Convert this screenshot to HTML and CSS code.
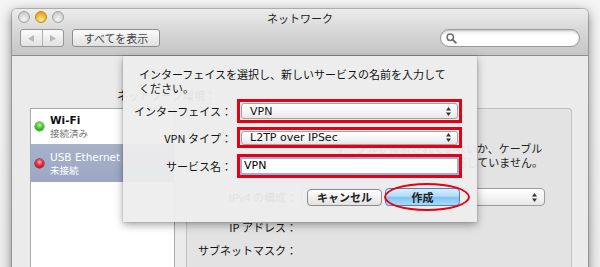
FILE: index.html
```html
<!DOCTYPE html>
<html lang="ja">
<head>
<meta charset="utf-8">
<title>ネットワーク</title>
<link rel="stylesheet" href="styles.css">
</head>
<body>
<div class="window">
  <div class="titlebar">
    <div class="title-row">
      <div class="lights">
        <span class="light"></span>
        <span class="light light-min"></span>
        <span class="light"></span>
      </div>
      <div class="title">ネットワーク</div>
      <div></div>
    </div>
    <div class="toolbar">
      <div class="nav-seg">
        <span class="seg"><svg width="6" height="7" viewBox="0 0 6 7"><polygon points="6,0 6,7 0,3.5" fill="#b8b8b8"/></svg></span>
        <span class="seg"><svg width="6" height="7" viewBox="0 0 6 7"><polygon points="0,0 0,7 6,3.5" fill="#b8b8b8"/></svg></span>
      </div>
      <div class="tb-btn">すべてを表示</div>
      <div class="search">
        <svg width="11" height="11" viewBox="0 0 11 11"><circle cx="4.3" cy="4.3" r="3.2" fill="none" stroke="#707070" stroke-width="1.5"/><line x1="6.6" y1="6.6" x2="9.8" y2="9.8" stroke="#707070" stroke-width="2" stroke-linecap="round"/></svg>
      </div>
    </div>
  </div>

  <div class="content">
    <div class="location">ネットワーク環境：</div>
    <div class="main">
      <div class="svc-list">
        <div class="svc">
          <span class="dot dot-green"></span>
          <div class="svc-text">
            <div class="svc-name">Wi-Fi</div>
            <div class="svc-status">接続済み</div>
          </div>
        </div>
        <div class="svc svc-selected">
          <span class="dot dot-red"></span>
          <div class="svc-text">
            <div class="svc-name">USB Ethernet</div>
            <div class="svc-status">未接続</div>
          </div>
        </div>
      </div>
      <div class="panel">
        <div class="status-text">ケーブルが接続されていないか、ケーブル<br>の先にあるデバイスが応答していません。</div>
        <div class="prow prow-ipv4"><span class="plabel">IPv4 の構成：</span>
          <span class="ppop">
            <svg width="5" height="9" viewBox="0 0 5 9"><polygon points="0,3.5 2.5,0 5,3.5" fill="#333"/><polygon points="0,5.5 2.5,9 5,5.5" fill="#333"/></svg>
          </span>
        </div>
        <div class="prow prow-ip"><span class="plabel">IP アドレス：</span></div>
        <div class="prow prow-mask"><span class="plabel">サブネットマスク：</span></div>
      </div>
    </div>
  </div>

  <div class="sheet">
    <div class="msg">インターフェイスを選択し、新しいサービスの名前を入力して<br>ください。</div>
    <div class="form">
      <div class="flabel row1">インターフェイス：</div>
      <div class="hl hl1">
        <div class="popup"><span>VPN</span>
          <svg width="5" height="9" viewBox="0 0 5 9"><polygon points="0,3.5 2.5,0 5,3.5" fill="#333"/><polygon points="0,5.5 2.5,9 5,5.5" fill="#333"/></svg>
        </div>
      </div>
      <div class="flabel row2">VPN タイプ：</div>
      <div class="hl hl2">
        <div class="popup"><span>L2TP over IPSec</span>
          <svg width="5" height="9" viewBox="0 0 5 9"><polygon points="0,3.5 2.5,0 5,3.5" fill="#333"/><polygon points="0,5.5 2.5,9 5,5.5" fill="#333"/></svg>
        </div>
      </div>
      <div class="flabel row3">サービス名：</div>
      <div class="hl hl3">
        <div class="field">VPN</div>
      </div>
    </div>
    <div class="buttons">
      <div class="btn">キャンセル</div>
      <div class="btn btn-primary">作成</div>
    </div>
    <div class="ring"></div>
  </div>
</div>
</body>
</html>
```

FILE: styles.css
```css
* { box-sizing: border-box; }

body {
  margin: 0;
  width: 600px;
  height: 267px;
  overflow: hidden;
  background: linear-gradient(#f5f5f5, #ededed);
  font-family: "DejaVu Sans", "Noto Sans CJK JP", sans-serif;
  font-size: 11px;
  color: #111;
}

.window {
  position: relative;
  margin: 9px 0 0 12px;
  width: 576px;
  height: 270px;
  background: #ebebeb;
  border-radius: 5px 5px 0 0;
  box-shadow: 0 0 0 1px rgba(0,0,0,0.18), 0 3px 12px rgba(0,0,0,0.5);
}

/* ---------- title bar ---------- */
.titlebar {
  height: 47px;
  background: linear-gradient(#ececec, #d6d6d6 50%, #c6c6c6);
  border-bottom: 1px solid #8c8c8c;
  border-radius: 5px 5px 0 0;
}

.title-row {
  display: grid;
  grid-template-columns: 1fr auto 1fr;
  align-items: start;
  height: 20px;
  padding-top: 2px;
}

.lights {
  display: flex;
  gap: 5px;
  padding-left: 6px;
}

.light {
  width: 12px;
  height: 12px;
  border-radius: 50%;
  border: 1px solid #a2a2a2;
  background: radial-gradient(circle at 50% 70%, #f8f8f8 0, #dcdcdc 45%, #bdbdbd 100%);
}

.light-min {
  border-color: #c78a16;
  background: radial-gradient(circle at 50% 75%, #fff3a8 0, #f8c03a 45%, #dc8d0c 100%);
}

.title {
  font-family: "Noto Sans CJK JP", sans-serif;
  font-size: 11px;
  line-height: 14px;
  color: #222;
}

.toolbar {
  display: flex;
  align-items: flex-start;
  padding: 0 8px;
  height: 26px;
}

.nav-seg {
  display: flex;
  width: 44px;
  height: 18px;
  border: 1px solid #979797;
  border-radius: 3px;
  background: linear-gradient(#fbfbfb, #e2e2e2);
}

.seg {
  flex: 1;
  display: flex;
  align-items: center;
  justify-content: center;
}

.seg + .seg { border-left: 1px solid #b0b0b0; }

.tb-btn {
  margin-left: 8px;
  width: 88px;
  height: 18px;
  border: 1px solid #8e8e8e;
  border-radius: 3px;
  background: linear-gradient(#fcfcfc, #e0e0e0);
  font-family: "Noto Sans CJK JP", sans-serif;
  font-size: 11px;
  line-height: 16px;
  text-align: center;
  color: #444;
}

.search {
  margin-left: auto;
  width: 140px;
  height: 18px;
  border: 1px solid #9a9a9a;
  border-radius: 9px;
  background: linear-gradient(#eeeeee, #ffffff 40%);
  box-shadow: inset 0 1px 2px rgba(0,0,0,0.18);
  display: flex;
  align-items: center;
  padding-left: 5px;
}

/* ---------- content ---------- */
.content {
  height: 222px;
}

.location {
  height: 52px;
  padding: 32px 0 0 105px;
  line-height: 14px;
  font-family: "Noto Sans CJK JP", sans-serif;
  color: #111;
}

.main {
  display: flex;
  gap: 11px;
  padding: 0 16px 0 18px;
}

.svc-list {
  width: 145px;
  height: 170px;
  background: #fff;
  border: 1px solid #a9a9a9;
  border-bottom: none;
}

.svc {
  display: flex;
  align-items: center;
  height: 35px;
  padding-left: 4px;
}

.svc-selected {
  height: 38px;
  background: linear-gradient(#a6b1ca, #9ca8c3);
  color: #fff;
}

.svc-text {
  margin-left: 6px;
  padding-top: 1px;
}

.svc-name {
  font-size: 10.5px;
  line-height: 13px;
  font-weight: bold;
}

.svc-selected .svc-name { font-weight: normal; }

.svc-status {
  font-family: "Noto Sans CJK JP", sans-serif;
  font-size: 9.5px;
  line-height: 13px;
  color: #777;
}

.svc-selected .svc-status { color: #fff; }

.dot {
  width: 9px;
  height: 9px;
  border-radius: 50%;
  flex: none;
}

.dot-green {
  background: radial-gradient(circle at 50% 35%, #b8f59a 0, #45c92a 45%, #1a8a0e 100%);
  box-shadow: 0 0 0 0.5px #2a7a1a;
}

.dot-red {
  background: radial-gradient(circle at 50% 35%, #ffb0b8 0, #e8283c 45%, #98001a 100%);
  box-shadow: 0 0 0 0.5px #7a0010;
}

.panel {
  width: 386px;
  height: 170px;
  background: #e3e3e3;
  border: 1px solid #c0c0c0;
  border-bottom: none;
  border-radius: 4px 4px 0 0;
  font-family: "Noto Sans CJK JP", sans-serif;
}

.prow {
  display: flex;
  align-items: center;
}

.plabel {
  width: 110px;
  text-align: right;
  color: #111;
  flex: none;
}

.status-text {
  margin: 32px 0 0 148px;
  line-height: 14px;
  color: #222;
}

.prow-ipv4 { margin-top: 19px; height: 18px; }
.prow-ip { margin-top: 14px; height: 14px; }
.prow-mask { margin-top: 9px; height: 14px; }

.ppop {
  margin-left: 4px;
  width: 244px;
  height: 18px;
  border: 1px solid #9c9c9c;
  border-radius: 4px;
  background: linear-gradient(#ffffff, #f2f2f2 60%, #e6e6e6);
  display: flex;
  align-items: center;
  justify-content: flex-end;
  padding: 0 7px 0 8px;
}

/* ---------- sheet ---------- */
.sheet {
  position: absolute;
  left: 111px;
  top: 47px;
  width: 354px;
  height: 166px;
  background: rgba(237,237,237,0.94);
  box-shadow: 0 3px 8px rgba(0,0,0,0.35), 0 0 0 1px rgba(0,0,0,0.07);
  font-family: "Noto Sans CJK JP", sans-serif;
}

.msg {
  padding: 11px 0 0 16px;
  line-height: 14px;
  color: #111;
}

.form {
  display: grid;
  grid-template-columns: 109px 225px;
  column-gap: 5px;
  margin-top: 4px;
}

.flabel {
  text-align: right;
  display: flex;
  align-items: center;
  justify-content: flex-end;
  color: #111;
}

.row1 { height: 24px; }
.row2 { height: 21px; margin-top: 4px; }
.row3 { height: 24px; margin-top: 6px; }

.hl {
  border: 3px solid #e60012;
  display: flex;
  align-items: center;
  padding: 0 1px;
}

.hl1 { height: 24px; }
.hl2 { height: 21px; margin-top: 4px; }
.hl3 { height: 24px; margin-top: 6px; padding: 0; }

.popup {
  flex: 1;
  height: 16px;
  border: 1px solid #a3a3a3;
  border-radius: 3px;
  background: linear-gradient(#ffffff, #f4f4f4 60%, #e6e6e6);
  display: flex;
  align-items: center;
  justify-content: space-between;
  padding: 0 6px 0 8px;
  font-family: "DejaVu Sans", sans-serif;
  font-size: 11px;
  color: #111;
}

.hl2 .popup { height: 14px; }

.field {
  flex: 1;
  height: 18px;
  border: 2px solid #8fb4e2;
  background: #fff;
  padding-left: 2px;
  font-family: "DejaVu Sans", sans-serif;
  font-size: 11px;
  line-height: 14px;
  color: #000;
}

.buttons {
  display: flex;
  justify-content: flex-end;
  align-items: flex-start;
  gap: 3px;
  padding-right: 17px;
  margin-top: 10px;
}

.btn {
  width: 75px;
  height: 17px;
  margin-top: 1px;
  border: 1px solid #8c8c8c;
  border-radius: 4px;
  background: linear-gradient(#ffffff, #f0f0f0 50%, #e2e2e2);
  font-weight: bold;
  font-size: 11px;
  line-height: 15px;
  text-align: center;
  color: #222;
}

.btn-primary {
  height: 18px;
  margin-top: 0;
  border-color: #5581b5;
  background: linear-gradient(#d8eefd 0%, #b2dcf9 45%, #84c4f3 52%, #a9d8f8 100%);
  line-height: 16px;
}

.ring {
  position: absolute;
  left: 261px;
  top: 127px;
  width: 86px;
  height: 28px;
  border: 2px solid #e60012;
  border-radius: 50%;
}
```
